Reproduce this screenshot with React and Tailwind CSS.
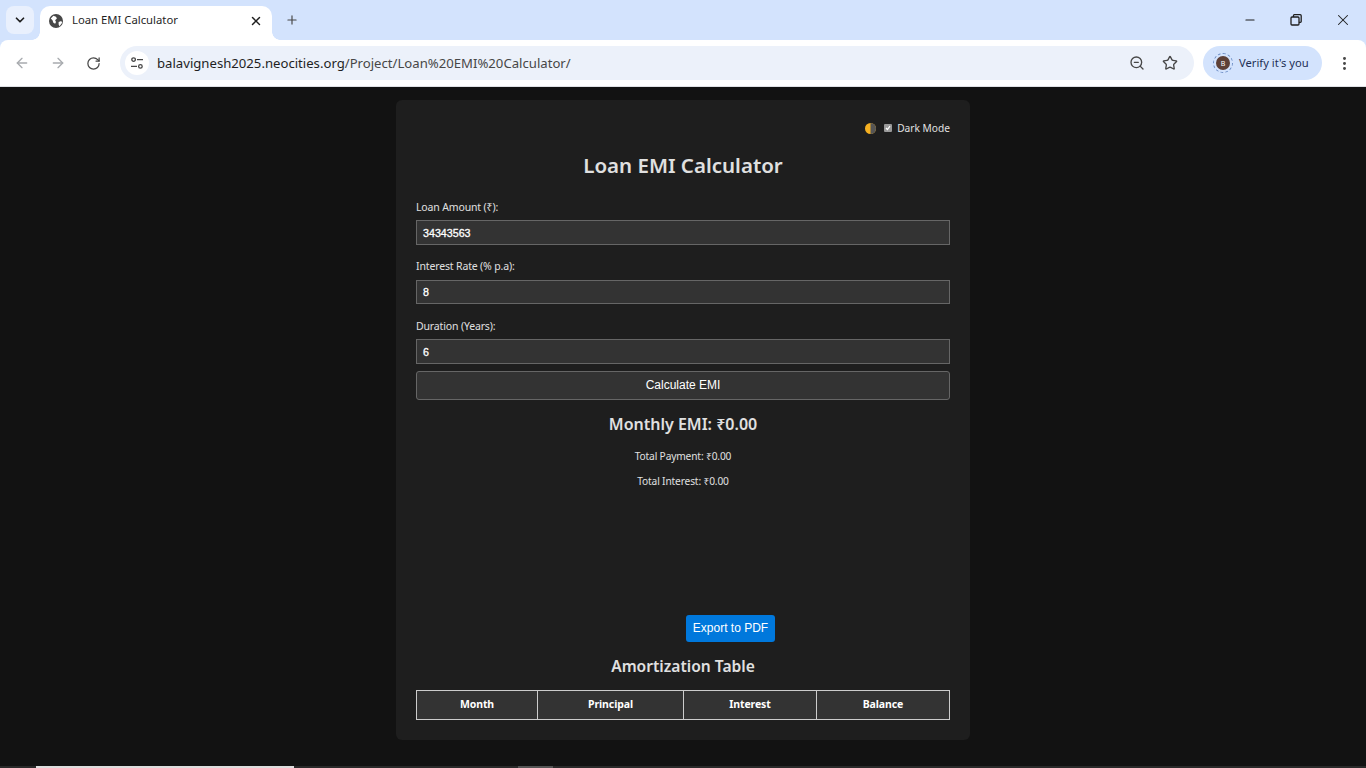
import React from 'react';
import { ChevronDown, X, Plus, ArrowLeft, ArrowRight, RotateCw, Minus, ZoomOut, Star, EllipsisVertical } from 'lucide-react';

const uiFont = "font-['Noto_Sans','Open_Sans',sans-serif]";
const fieldFont = "font-['Liberation_Sans',Arial,sans-serif]";

function Field({ label, value, gap, height, labelGap }) {
  return (
    <div className={gap}>
      <label className={`block text-[10.5px] leading-[16px] text-[#e0e0e0] tracking-[-0.15px] ${labelGap}`}>{label}</label>
      <div className={`${fieldFont} ${height} bg-[#333333] border border-[#666666] pl-[6px] pt-px flex items-center text-[10.7px] font-normal [-webkit-text-stroke:0.3px_white] text-white`}>
        {value}
      </div>
    </div>
  );
}

export default function App() {
  return (
    <div className={`${uiFont} w-[1366px] h-[768px] overflow-hidden flex flex-col bg-[#121212]`}>
      <div className="shrink-0 bg-[#d3e3fd]">
        {/* Tab strip */}
        <div className="h-10 flex items-end pl-[6px]">
          <div className="w-[28px] h-[28px] mb-[6px] rounded-lg bg-[#e9f0fd] flex items-center justify-center">
            <ChevronDown size={14} strokeWidth={3} className="text-[#1f1f1f]" />
          </div>
          <div className="relative w-[232px] h-[34px] ml-[6px] rounded-t-[10px] bg-white flex items-center pl-[9px] pr-[9px] pb-[5px]">
            <div className="absolute right-full bottom-0 w-2 h-2 bg-[radial-gradient(circle_at_0_0,transparent_7.5px,white_8px)]"></div>
            <div className="absolute left-full bottom-0 w-2 h-2 bg-[radial-gradient(circle_at_100%_0,transparent_7.5px,white_8px)]"></div>
            <svg width="14" height="14" viewBox="0 0 16 16" className="shrink-0">
              <circle cx="8" cy="8" r="8" fill="#474747" />
              <path d="M2 5l3-3 3 1 1 2-2 2 1 2-1 2-2-1-1-3zM11 9l3-1 1 2-3 4-1-2z" fill="#ffffff" />
            </svg>
            <span className="ml-[9px] flex-1 text-[11.3px] text-[#1f1f1f]">Loan EMI Calculator</span>
            <X size={14} strokeWidth={2.5} className="text-[#1f1f1f]" />
          </div>
          <div className="ml-[13px] mb-[13px] w-[14px] h-[14px] flex items-center justify-center">
            <Plus size={16} strokeWidth={2} className="text-[#474747]" />
          </div>
          <div className="ml-auto flex items-center mb-[11px] text-[#1f1f1f]">
            <Minus size={14} strokeWidth={1.8} className="mr-[33px]" />
            <svg width="12" height="12" viewBox="0 0 12 12" fill="none" stroke="#1f1f1f" strokeWidth="1.3" className="mr-[32px]">
              <rect x="1" y="3" width="8" height="8" rx="1" />
              <path d="M3.5 3V1.5a.8.8 0 0 1 .8-.8h5.9a1 1 0 0 1 1 1v5.9a.8.8 0 0 1-.8.8H9" />
            </svg>
            <X size={18} strokeWidth={1.4} className="mr-[14px]" />
          </div>
        </div>

        {/* Toolbar */}
        <div className="h-[47px] bg-white flex items-center border-b border-[#dfe1e5] rounded-t-[8px]">
          <ArrowLeft size={16} strokeWidth={2} className="ml-[14px] text-[#a8abaf]" />
          <ArrowRight size={16} strokeWidth={2} className="ml-[20px] text-[#a8abaf]" />
          <RotateCw size={15} strokeWidth={2} className="ml-[20px] text-[#474747]" />
          <div className="ml-[19px] w-[1074px] h-[34px] rounded-full bg-[#ecf1fa] flex items-center pl-[5px] pr-[16px]">
            <div className="w-[24px] h-[24px] rounded-full bg-white flex items-center justify-center">
              <svg width="14" height="14" viewBox="0 0 14 14" fill="none" stroke="#474747" strokeWidth="1.3">
                <circle cx="3.6" cy="3.6" r="1.8" />
                <path d="M7 3.6h6M1 10.4h6" />
                <circle cx="10.4" cy="10.4" r="1.8" />
              </svg>
            </div>
            <span className="ml-[8px] pt-px text-[13.15px] text-[#1f1f1f]">
              balavignesh2025.neocities.org<span className="text-[#474747]">/Project/Loan%20EMI%20Calculator/</span>
            </span>
            <ZoomOut size={16} strokeWidth={2} className="ml-auto text-[#474747]" />
            <Star size={16} strokeWidth={2} className="ml-[17px] text-[#474747]" />
          </div>
          <div className="ml-[9px] w-[119px] h-[34px] rounded-full bg-[#d3e3fd] flex items-center pl-[10px]">
            <div className="w-[20px] h-[20px] rounded-full border border-dashed border-[#6b8cc4] flex items-center justify-center">
              <div className="w-[14px] h-[14px] rounded-full bg-[#5d4037] text-[7px] leading-none text-white flex items-center justify-center">B</div>
            </div>
            <span className="ml-[6px] text-[11.2px] text-[#1e2f55]">Verify it's you</span>
          </div>
          <EllipsisVertical size={17} strokeWidth={2.2} className="ml-[14px] text-[#474747]" />
        </div>
      </div>

      {/* Page */}
      <div className="flex-1 min-h-0 flex flex-col items-center pt-[13px] bg-[#121212] relative">
        <div className="w-[574px] h-[640px] bg-[#1e1e1e] rounded-[6px] px-5 pt-5">
          <div className="h-[16px] flex items-center justify-end text-[10.2px] text-[#e0e0e0]">
            <svg width="11" height="11" viewBox="0 0 10 10" className="mr-[8px]">
              <circle cx="5" cy="5" r="5" fill="#f5b021" />
              <path d="M5 0a5 5 0 0 1 0 10z" fill="#555555" />
            </svg>
            <span className="w-[8px] h-[8px] bg-[#999999] rounded-[1px] mr-[5px] flex items-center justify-center">
              <svg width="6" height="6" viewBox="0 0 6 6" fill="none" stroke="#ffffff" strokeWidth="1.2">
                <path d="M1 3l1.4 1.5L5 1.2" />
              </svg>
            </span>
            <span className="pt-[2px]">Dark Mode</span>
          </div>
          <h1 className="mt-[13px] text-center text-[20.5px] leading-[32px] font-semibold text-[#e0e0e0]">Loan EMI Calculator</h1>
          <Field label="Loan Amount (₹):" value="34343563" gap="mt-[18px]" height="h-[25px]" labelGap="mb-[5px]" />
          <Field label="Interest Rate (% p.a):" value="8" gap="mt-[13px]" height="h-[24px]" labelGap="mb-[6px]" />
          <Field label="Duration (Years):" value="6" gap="mt-[14px]" height="h-[25px]" labelGap="mb-[5px]" />
          <button className={`${fieldFont} mt-[7px] w-full h-[29px] pb-[2px] bg-[#333333] border border-[#666666] rounded-[3px] text-[12px] text-white`}>
            Calculate EMI
          </button>
          <h2 className="mt-[11px] text-center text-[16px] leading-[26px] font-semibold text-[#e0e0e0]">Monthly EMI: ₹0.00</h2>
          <p className="mt-[11px] text-center text-[10.2px] tracking-[-0.15px] leading-[16px] text-[#e0e0e0]">Total Payment: ₹0.00</p>
          <p className="mt-[9px] text-center text-[10.2px] tracking-[-0.15px] leading-[16px] text-[#e0e0e0]">Total Interest: ₹0.00</p>
          <div className="h-[126px]"></div>
          <div className="flex">
            <button className={`${fieldFont} ml-[270px] w-[89px] h-[27px] pb-[2px] bg-[#0078dc] rounded-[3px] text-[12px] text-white`}>
              Export to PDF
            </button>
          </div>
          <h3 className="mt-[12px] text-center text-[15.6px] leading-[24px] font-semibold text-[#e0e0e0]">Amortization Table</h3>
          <table className="mt-[12px] w-[533px] table-fixed border-collapse text-[10.5px] tracking-[-0.1px] font-bold text-white">
            <thead>
              <tr className="h-[29px] bg-[#333333]">
                <th className="w-[121px] border border-[#cccccc]">Month</th>
                <th className="w-[146px] border border-[#cccccc]">Principal</th>
                <th className="w-[133px] border border-[#cccccc]">Interest</th>
                <th className="w-[133px] border border-[#cccccc]">Balance</th>
              </tr>
            </thead>
          </table>
        </div>
        {/* Sliver of the next window along the bottom edge */}
        <div className="absolute left-0 right-0 bottom-0 h-[2px] bg-[#2a2a2a] flex">
          <div className="ml-[36px] w-[258px] bg-[#dddddd]"></div>
          <div className="ml-[224px] w-[35px] bg-[#555555]"></div>
        </div>
      </div>
    </div>
  );
}
